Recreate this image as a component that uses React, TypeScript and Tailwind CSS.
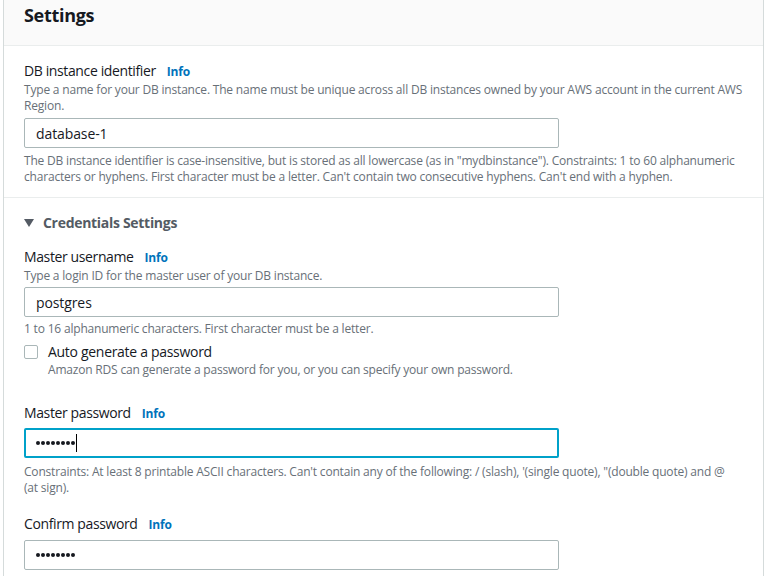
import React from 'react';

const font = { fontFamily: '"Open Sans", "Noto Sans", Arial, sans-serif' };

function Info() {
  return <span className="ml-[11px] text-[12px] font-bold tracking-[-0.2px] text-[#0073bb]">Info</span>;
}

function Label({ text }: { text: string }) {
  return (
    <div className="flex items-baseline text-[14px] leading-[20px] tracking-[-0.38px] text-[#16191f]">
      <span>{text}</span>
      <Info />
    </div>
  );
}

function Hint({ children, className = '' }: { children: React.ReactNode; className?: string }) {
  return <p className={`text-[12px] leading-[16px] tracking-[-0.19px] text-[#687078] ${className}`}>{children}</p>;
}

function Dots() {
  return (
    <span className="flex gap-[1px]">
      {[0, 1, 2, 3, 4, 5, 6, 7].map((i) => (
        <span key={i} className="h-[4px] w-[4px] rounded-full bg-[#16191f]" />
      ))}
    </span>
  );
}

function TextInput({ value, focused = false, password = false }: { value: string; focused?: boolean; password?: boolean }) {
  return (
    <div
      className={`flex h-[30px] w-[535px] items-center rounded-[2px] bg-white text-[14px] tracking-[-0.1px] text-[#16191f] ${
        focused ? 'border-2 border-[#00a1c9] px-[10px]' : 'border border-[#aab7b8] px-[11px]'
      }`}
    >
      {password ? <Dots /> : <span>{value}</span>}
      {focused && <span className="ml-[1px] h-[18px] w-[1px] bg-black" />}
    </div>
  );
}

export default function App() {
  return (
    <div className="min-h-screen bg-white" style={font}>
      <div className="ml-[3px] w-[761px] border-x border-[#d5dbdb] bg-white">
        {/* Header */}
        <div className="h-[46px] border-b border-[#eaeded] bg-[#fafafa] px-[20px] pt-[1px]">
          <h2 className="text-[18px] font-bold leading-[28px] tracking-[-0.3px] text-[#16191f]">Settings</h2>
        </div>

        {/* DB instance identifier */}
        <div className="border-b border-[#eaeded] px-[20px] pt-[15px] pb-[12px]">
          <Label text="DB instance identifier" />
          <Hint>
            Type a name for your DB instance. The name must be unique across all DB instances owned by your AWS account in the current AWS
            <br />
            Region.
          </Hint>
          <div className="mt-[4px]">
            <TextInput value="database-1" />
          </div>
          <Hint className="mt-[5px]">
            The DB instance identifier is case-insensitive, but is stored as all lowercase (as in "mydbinstance"). Constraints: 1 to 60 alphanumeric
            <br />
            characters or hyphens. First character must be a letter. Can't contain two consecutive hyphens. Can't end with a hyphen.
          </Hint>
        </div>

        {/* Credentials */}
        <div className="px-[20px] pt-[15px] pb-[10px]">
          <div className="flex items-center gap-[9px] text-[14px] font-bold leading-[20px] tracking-[-0.3px] text-[#545b64]">
            <svg width="10" height="8" viewBox="0 0 10 8">
              <polygon points="0,0 10,0 5,8" fill="#545b64" />
            </svg>
            <span>Credentials Settings</span>
          </div>

          <div className="mt-[14px]">
            <Label text="Master username" />
            <Hint>Type a login ID for the master user of your DB instance.</Hint>
            <div className="mt-[3px]">
              <TextInput value="postgres" />
            </div>
            <Hint className="mt-[4px]">1 to 16 alphanumeric characters. First character must be a letter.</Hint>
          </div>

          <div className="mt-[5px] flex gap-[10px]">
            <div className="mt-[3px] h-[14px] w-[14px] rounded-[2px] border border-[#aab7b8] bg-white" />
            <div>
              <div className="text-[14px] leading-[20px] tracking-[-0.3px] text-[#16191f]">Auto generate a password</div>
              <Hint>Amazon RDS can generate a password for you, or you can specify your own password.</Hint>
            </div>
          </div>

          <div className="mt-[25px]">
            <Label text="Master password" />
            <div className="mt-[4px]">
              <TextInput value="••••••••" focused password />
            </div>
            <Hint className="mt-[6px]">
              Constraints: At least 8 printable ASCII characters. Can't contain any of the following: / (slash), '(single quote), "(double quote) and @
              <br />
              (at sign).
            </Hint>
          </div>

          <div className="mt-[18px]">
            <Label text="Confirm password" />
            <div className="mt-[5px]">
              <TextInput value="••••••••" password />
            </div>
          </div>
        </div>
      </div>
    </div>
  );
}
